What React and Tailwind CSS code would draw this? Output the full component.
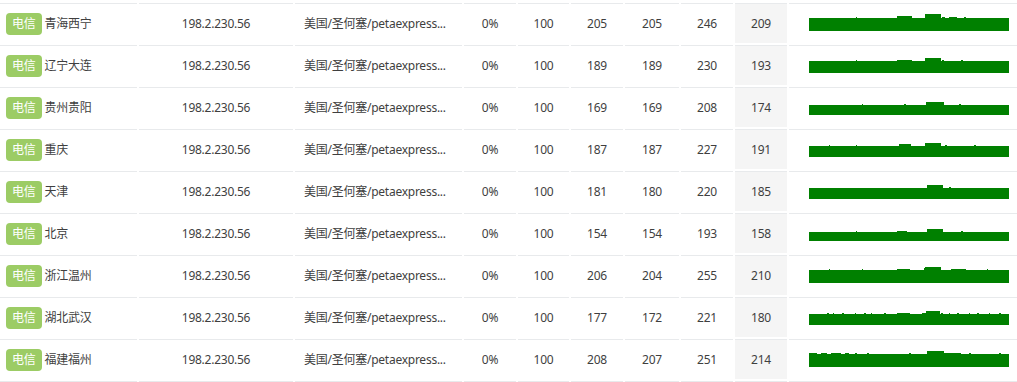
const ROWS = [
  { city: '青海西宁', a: 205, b: 205, c: 246, avg: 209, ticks: [[47, 1, 1], [88, 15, 2], [116, 16, 4], [133, 3, 1.5], [140, 8, 1], [155, 2, 1]] },
  { city: '辽宁大连', a: 189, b: 189, c: 230, avg: 193, ticks: [[47, 1, 1], [88, 15, 1.5], [116, 16, 3.5], [133, 2, 1], [152, 2, 1]] },
  { city: '贵州贵阳', a: 169, b: 169, c: 208, avg: 174, ticks: [[53, 1, 1], [95, 2, 1], [117, 18, 2.5], [150, 2, 1]] },
  { city: '重庆', a: 187, b: 187, c: 227, avg: 191, ticks: [[20, 1, 1], [47, 1, 1], [90, 12, 1.5], [116, 16, 3], [136, 2, 1], [165, 2, 1]] },
  { city: '天津', a: 181, b: 180, c: 220, avg: 185, ticks: [[118, 16, 2.5], [140, 2, 1]] },
  { city: '北京', a: 154, b: 154, c: 193, avg: 158, ticks: [[47, 1, 1], [88, 10, 1], [118, 16, 2.5], [152, 2, 1]] },
  { city: '浙江温州', a: 206, b: 204, c: 255, avg: 210, ticks: [[20, 1, 1], [53, 1, 1], [88, 13, 1], [115, 1, 2], [116, 16, 3], [142, 15, 1], [178, 1, 1]] },
  { city: '湖北武汉', a: 177, b: 172, c: 221, avg: 180, ticks: [[18, 2, 1], [24, 1, 1], [33, 2, 1], [46, 1, 1], [55, 2, 1], [62, 1, 1], [75, 2, 1], [88, 13, 1.5], [113, 4, 1], [117, 14, 3], [132, 2, 1], [140, 1, 1], [148, 2, 1], [160, 1, 1], [168, 2, 1], [180, 1, 1], [190, 2, 1]] },
  { city: '福建福州', a: 208, b: 207, c: 251, avg: 214, ticks: [[0, 8, 1], [12, 6, 1], [22, 10, 1], [36, 4, 1], [46, 2, 1], [58, 2, 1], [100, 2, 1], [118, 17, 3], [128, 24, 1], [160, 2, 1], [190, 2, 1]] },
]

const WIDTHS = ['w-[137px]', 'w-[154px]', 'w-[167px]', 'w-[52px]', 'w-[51px]', 'w-[52px]', 'w-[54px]', 'w-[52px]', 'w-[52px]']

function Spark({ avg, ticks }) {
  const bottom = 27
  const base = avg * 0.06
  return (
    <svg width="200" height="39" className="ml-[20px] block" shapeRendering="crispEdges">
      <rect x="0" y={bottom - base} width="200" height={base} fill="#008000" />
      {ticks.map(([x, w, h], i) => (
        <rect key={i} x={x} y={bottom - base - h} width={w} height={h + 0.5} fill="#008000" />
      ))}
    </svg>
  )
}

function Cell({ i, children, className = '' }) {
  return (
    <div className={`${WIDTHS[i]} h-[40px] shrink-0 border-t border-[#e8eaec] flex items-center ${className}`}>
      {children}
    </div>
  )
}

export default function App() {
  return (
    <div
      className="w-[1017px] h-[382px] overflow-hidden bg-white pt-[3px] flex flex-col gap-[2px] text-[12px] text-[#3f3f3f] tracking-[-0.25px]"
      style={{ fontFamily: '"Noto Sans", "Noto Sans CJK SC", sans-serif' }}
    >
      {ROWS.map((r) => (
        <div key={r.city} className="flex gap-[2px] shrink-0">
          <Cell i={0}>
            <span className="ml-[6px] h-[22px] px-[6px] rounded-[4px] bg-[#9ccc65] text-white flex items-center leading-none">电信</span>
            <span className="ml-[3px]">{r.city}</span>
          </Cell>
          <Cell i={1} className="justify-center">198.2.230.56</Cell>
          <Cell i={2} className="pl-[9px] overflow-hidden whitespace-nowrap">美国/圣何塞/petaexpress...</Cell>
          <Cell i={3} className="justify-center">0%</Cell>
          <Cell i={4} className="justify-center">100</Cell>
          <Cell i={5} className="justify-center">{r.a}</Cell>
          <Cell i={6} className="justify-center">{r.b}</Cell>
          <Cell i={7} className="justify-center">{r.c}</Cell>
          <Cell i={8} className="justify-center bg-[#f5f5f5]">{r.avg}</Cell>
          <div className="flex-1 h-[40px] border-t border-[#e8eaec]">
            <Spark avg={r.avg} ticks={r.ticks} />
          </div>
        </div>
      ))}
      <div className="flex gap-[2px] shrink-0">
        {WIDTHS.map((w, i) => (
          <div key={i} className={`${w} h-[1px] shrink-0 border-t border-[#e8eaec]`} />
        ))}
        <div className="flex-1 h-[1px] border-t border-[#e8eaec]" />
      </div>
    </div>
  )
}
